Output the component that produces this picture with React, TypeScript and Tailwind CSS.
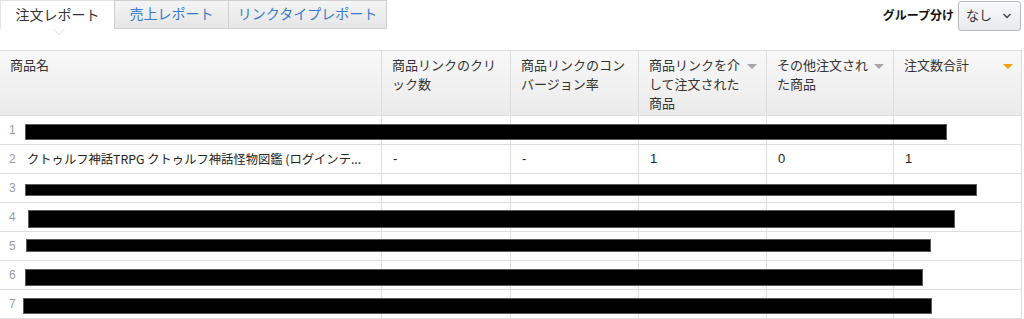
import { ChevronDown } from "lucide-react";

const font = "font-['Liberation_Sans','Noto_Sans_CJK_JP',sans-serif]";

const headers = [
  { lines: ["商品名"], sort: "" },
  { lines: ["商品リンクのクリ", "ック数"], sort: "" },
  { lines: ["商品リンクのコン", "バージョン率"], sort: "" },
  { lines: ["商品リンクを介", "して注文された", "商品"], sort: "gray" },
  { lines: ["その他注文され", "た商品"], sort: "gray" },
  { lines: ["注文数合計"], sort: "orange" },
];

// redaction bars drawn over rows
const rows = [
  { n: 1, bar: "left-[25px] top-[8px] w-[922px] h-[16px]" },
  {
    n: 2,
    cells: ["クトゥルフ神話TRPG クトゥルフ神話怪物図鑑 (ログインテ...", "-", "-", "1", "0", "1"],
  },
  { n: 3, bar: "left-[25px] top-[10px] w-[952px] h-[12px]" },
  { n: 4, bar: "left-[28px] top-[7px] w-[927px] h-[18px]" },
  { n: 5, bar: "left-[26px] top-[7px] w-[905px] h-[13px]" },
  { n: 6, bar: "left-[25px] top-[8px] w-[898px] h-[17px]" },
  { n: 7, bar: "left-[23px] top-[8px] w-[909px] h-[16px]" },
];

const cols = "grid grid-cols-[381px_129px_128px_128px_127px_129px]";

function SortArrow({ tone }: { tone: string }) {
  if (!tone) return null;
  return (
    <div
      className={
        "mt-[8px] h-0 w-0 shrink-0 border-x-[5px] border-t-[5px] border-x-transparent " +
        (tone === "orange" ? "border-t-[#f0a000]" : "border-t-[#a6a6a6]")
      }
    />
  );
}

export default function App() {
  return (
    <div className={`w-[1024px] h-[319px] overflow-hidden bg-white text-[#333] ${font}`}>
      {/* Top bar */}
      <div className="flex h-[50px] items-start justify-between">
        <div className="flex h-[29px]">
          <div className="relative flex w-[114px] items-center justify-center border-l border-t border-[#e3e3e3] bg-white text-[14px] text-[#333]">
            注文レポート
            <div className="absolute left-[52px] top-[28px] h-0 w-0 border-x-[6px] border-t-[6px] border-x-transparent border-t-[#dcdcdc]" />
            <div className="absolute left-[53px] top-[28px] h-0 w-0 border-x-[5px] border-t-[5px] border-x-transparent border-t-white" />
          </div>
          <div className="flex w-[115px] items-center justify-center border border-[#d0d0d0] bg-gradient-to-b from-[#f4f4f4] to-[#e6e6e6] text-[14px] text-[#3a7bc8]">
            売上レポート
          </div>
          <div className="flex w-[158px] items-center justify-center border border-l-0 border-[#d0d0d0] bg-gradient-to-b from-[#f4f4f4] to-[#e6e6e6] text-[14px] text-[#3a7bc8]">
            リンクタイプレポート
          </div>
        </div>
        <div className="mr-[3px] mt-[1px] flex items-center gap-[4px]">
          <span className="text-[12px] font-bold text-[#111]">グループ分け</span>
          <button className="flex h-[30px] w-[63px] items-center justify-center gap-[9px] whitespace-nowrap rounded-[3px] border border-[#b5b8bd] bg-gradient-to-b from-[#f8f9fa] to-[#e8eaed] text-[13px] text-[#333] shadow-[0_1px_0_rgba(255,255,255,0.6)_inset]">
            <span>なし</span>
            <ChevronDown size={12} strokeWidth={3.5} className="shrink-0 text-[#555]" />
          </button>
        </div>
      </div>

      {/* Table */}
      <div className="w-[1022px] border-r border-t border-[#dddddd]">
        <div className={`${cols} h-[65px] border-b border-[#dddddd] bg-gradient-to-b from-[#f8f8f8] to-[#ebebeb]`}>
          {headers.map((h, i) => (
            <div
              key={i}
              className={
                "flex gap-[6px] pl-[10px] pr-[9px] pt-[5px] text-[13px] leading-[19px] text-[#333] " +
                (i > 0 ? "border-l border-[#dddddd]" : "")
              }
            >
              <div className="flex-1">
                {h.lines.map((l) => (
                  <div key={l} className="whitespace-nowrap">
                    {l}
                  </div>
                ))}
              </div>
              <SortArrow tone={h.sort} />
            </div>
          ))}
        </div>

        {rows.map((r) => (
          <div key={r.n} className={`relative ${cols} h-[29px] border-b border-[#dddddd]`}>
            <div className="flex items-center overflow-hidden pl-[9px]">
              <span className="w-[18px] shrink-0 text-[12px] text-[#9a9a9a]">{r.n}</span>
              <span className="whitespace-nowrap font-['Noto_Sans_CJK_JP',sans-serif] text-[12.3px] text-[#222]">
                {r.cells ? r.cells[0] : ""}
              </span>
            </div>
            {[1, 2, 3, 4, 5].map((c) => (
              <div key={c} className="flex items-center border-l border-[#dddddd] pl-[11px] text-[13px] text-[#222]">
                {r.cells ? r.cells[c] : ""}
              </div>
            ))}
            {r.bar && <div className={`absolute border border-[#5a5a5a] bg-black ${r.bar}`} />}
          </div>
        ))}
      </div>
    </div>
  );
}
